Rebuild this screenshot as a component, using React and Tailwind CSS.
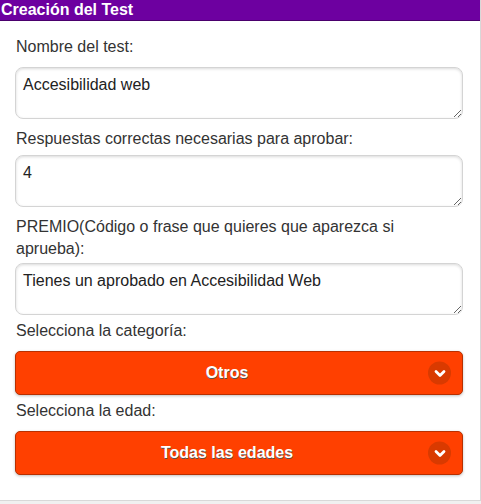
import React from "react";

function Chevron() {
  return (
    <span className="absolute right-[11px] top-1/2 -translate-y-1/2 w-[23px] h-[23px] rounded-full bg-[#d93a00] flex items-center justify-center">
      <svg width="14" height="14" viewBox="0 0 14 14" fill="none">
        <path d="M3 5 L7 9 L11 5" stroke="white" strokeWidth="2.8" strokeLinecap="round" strokeLinejoin="round" />
      </svg>
    </span>
  );
}

function SelectBtn({ label }) {
  return (
    <div className="relative h-[44px] rounded-[5px] bg-[#ff4000] border border-[#b83000] shadow-[0_1px_3px_rgba(0,0,0,0.25)] flex items-center justify-center pr-[24px]">
      <span className="text-white font-bold text-[16px] [text-shadow:0_1px_0_#555]">{label}</span>
      <Chevron />
    </div>
  );
}

function Area({ value }) {
  return (
    <textarea
      readOnly
      defaultValue={value}
      className="block w-full h-[52px] rounded-[8px] border border-[#d4d4d4] bg-white px-[7px] py-[7px] text-[16px] leading-[20px] text-[#222] shadow-[inset_0_1px_3px_rgba(0,0,0,0.15)] outline-none resize-y"
    />
  );
}

export default function App() {
  return (
    <div className="w-[481px] h-[504px] bg-[#f0f0f0] font-['Liberation_Sans',Arial,sans-serif]">
      <div className="w-[481px] h-[501px] bg-white border-r border-b border-[#d8d8d8]">
        <div className="h-[21px] bg-[#6d00a0] border-b border-[#4a006c] text-white font-bold text-[16px] leading-[20px] pl-[1px]">
          Creación del Test
        </div>
        <div className="pl-[15px] pr-[17px] pt-[15px] text-[16px] leading-[22px] text-[#333]">
          <div className="pl-[1px] mb-[9px]">Nombre del test:</div>
          <Area value="Accesibilidad web" />
          <div className="pl-[1px] mt-[9px] mb-[5px]">Respuestas correctas necesarias para aprobar:</div>
          <Area value="4" />
          <div className="pl-[1px] mt-[9px] mb-[3px]">PREMIO(Código o frase que quieres que aparezca si aprueba):</div>
          <Area value="Tienes un aprobado en Accesibilidad Web" />
          <div className="pl-[1px] mt-[5px] mb-[9px]">Selecciona la categoría:</div>
          <SelectBtn label="Otros" />
          <div className="pl-[1px] mt-[5px] mb-[9px]">Selecciona la edad:</div>
          <SelectBtn label="Todas las edades" />
        </div>
      </div>
    </div>
  );
}
